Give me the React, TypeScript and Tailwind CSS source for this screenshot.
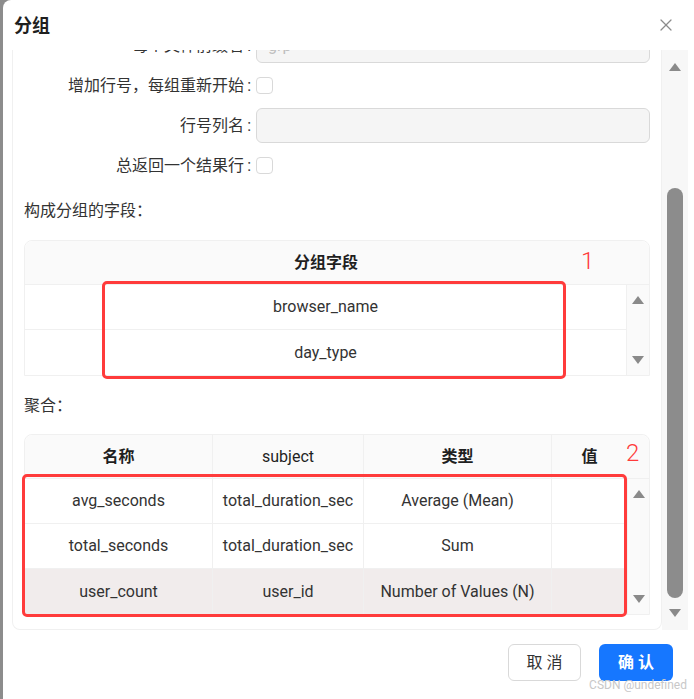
import { X } from 'lucide-react';

const FONT = { fontFamily: 'Roboto, "Noto Sans CJK SC", sans-serif' };

function Caret({ down = false }: { down?: boolean }) {
  return (
    <svg width="12" height="8" viewBox="0 0 12 8" className="block">
      {down ? <path d="M0 0h12L6 8z" fill="#8a8a8a" /> : <path d="M6 0l6 8H0z" fill="#8a8a8a" />}
    </svg>
  );
}

function Checkbox() {
  return <span className="inline-block w-[17px] h-[17px] rounded border border-[#d9d9d9] bg-white" />;
}

function FormRow({ label, children, tall = false }: { label: string; children: React.ReactNode; tall?: boolean }) {
  return (
    <div className={`flex items-center ${tall ? 'h-[35px]' : 'h-[17px]'}`}>
      <div className="w-[232px] text-right text-[16px] text-[#333] whitespace-nowrap">
        {label}
        <span className="ml-[3px] mr-[5px]">:</span>
      </div>
      <div className="flex-1 flex items-center">{children}</div>
    </div>
  );
}

function InputBox({ placeholder = '' }: { placeholder?: string }) {
  return (
    <div className="w-full h-[35px] rounded-md border border-[#d9d9d9] bg-[#f5f5f5] px-[11px] flex items-center text-[16px] text-[#bfbfbf]">
      {placeholder}
    </div>
  );
}

function ScrollColumn() {
  return (
    <div className="w-[23px] border-l border-[#f0f0f0] bg-[#fafafa] flex flex-col items-center">
      <div className="mt-[11px]"><Caret /></div>
      <div className="flex-1" />
      <div className="mb-[11px]"><Caret down /></div>
    </div>
  );
}

const AGG_ROWS = [
  { name: 'avg_seconds', subject: 'total_duration_sec', type: 'Average (Mean)', value: '' },
  { name: 'total_seconds', subject: 'total_duration_sec', type: 'Sum', value: '' },
  { name: 'user_count', subject: 'user_id', type: 'Number of Values (N)', value: '' },
];

export default function App() {
  return (
    <div className="w-[694px] h-[699px] flex bg-[#8c8c8c] overflow-hidden" style={FONT}>
      <div className="w-[3px]" />
      <div className="relative flex-1 bg-white rounded-tl-lg flex flex-col">
        {/* header */}
        <div className="h-[50px] flex items-center justify-between pl-[11px] pr-[18px]">
          <span className="text-[18px] font-bold text-[#1f1f1f]">分组</span>
          <X size={20} strokeWidth={1.5} className="text-[#8c8c8c]" />
        </div>

        {/* body */}
        <div className="h-[580px] flex pl-[9px]">
          <div className="w-[650px] border-x border-b border-[#f0f0f0] rounded-b-lg overflow-hidden px-[11px]">
            <div className="-mt-[22px] flex flex-col">
              <div className="flex flex-col gap-[14px]">
                <FormRow label="每个文件前缀名" tall>
                  <InputBox placeholder="grp" />
                </FormRow>
                <FormRow label="增加行号，每组重新开始">
                  <Checkbox />
                </FormRow>
                <FormRow label="行号列名" tall>
                  <InputBox />
                </FormRow>
                <FormRow label="总返回一个结果行">
                  <Checkbox />
                </FormRow>
              </div>

              <div className="mt-[26px] h-[22px] leading-[22px] text-[16px] text-[#333]">构成分组的字段：</div>

              {/* group fields table */}
              <div className="relative mt-[18px] border border-[#f0f0f0] rounded-t-lg">
                <div className="h-[44px] bg-[#fafafa] border-b border-[#f0f0f0] rounded-t-lg flex">
                  <div className="w-[602px] flex items-center justify-center text-[16px] font-bold text-[#1f1f1f]">分组字段</div>
                </div>
                <div className="flex">
                  <div className="w-[602px] flex flex-col">
                    {['browser_name', 'day_type'].map((f, i) => (
                      <div key={f} className={`h-[45px] flex items-center justify-center text-[16px] text-[#333] ${i === 0 ? 'border-b border-[#f0f0f0]' : ''}`}>
                        {f}
                      </div>
                    ))}
                  </div>
                  <ScrollColumn />
                </div>
                <span className="absolute left-[556px] top-[2px] text-[24px] font-light text-[#ff3b3b]">1</span>
                <div className="absolute left-[77px] top-[40px] w-[464px] h-[98px] border-[3px] border-[#ff3b3b] rounded-[5px]" />
              </div>

              <div className="mt-[19px] h-[22px] leading-[22px] text-[16px] text-[#333]">聚合：</div>

              {/* aggregation table */}
              <div className="relative mt-[17px] border border-[#f0f0f0] rounded-t-lg">
                <div className="h-[44px] bg-[#fafafa] border-b border-[#f0f0f0] rounded-t-lg flex text-[16px] text-[#1f1f1f]">
                  <div className="w-[188px] flex items-center justify-center font-bold border-r border-[#f0f0f0]">名称</div>
                  <div className="w-[151px] flex items-center justify-center border-r border-[#f0f0f0]">subject</div>
                  <div className="w-[188px] flex items-center justify-center font-bold border-r border-[#f0f0f0]">类型</div>
                  <div className="w-[75px] flex items-center justify-center font-bold">值</div>
                </div>
                <div className="flex">
                  <div className="w-[602px] flex flex-col">
                    {AGG_ROWS.map((r, i) => (
                      <div
                        key={r.name}
                        className={`h-[45px] flex text-[16px] text-[#333] ${i < 2 ? 'border-b border-[#f0f0f0]' : 'bg-[#f1ecec]'}`}
                      >
                        <div className="w-[188px] flex items-center justify-center border-r border-[#f0f0f0]">{r.name}</div>
                        <div className="w-[151px] flex items-center justify-center border-r border-[#f0f0f0] whitespace-nowrap overflow-hidden">{r.subject}</div>
                        <div className="w-[188px] flex items-center justify-center border-r border-[#f0f0f0] whitespace-nowrap">{r.type}</div>
                        <div className="w-[75px] flex items-center justify-center">{r.value}</div>
                      </div>
                    ))}
                  </div>
                  <ScrollColumn />
                </div>
                <span className="absolute left-[601px] top-[0px] text-[24px] font-light text-[#ff3b3b]">2</span>
                <div className="absolute -left-[3px] top-[39px] w-[605px] h-[143px] border-[3px] border-[#ff3b3b] rounded-[5px]" />
              </div>
            </div>
          </div>

          {/* outer scrollbar */}
          <div className="w-[26px] bg-[#f7f7f7] flex flex-col items-center">
            <div className="mt-[13px]"><Caret /></div>
            <div className="mt-[117px] w-[16px] h-[410px] rounded-full bg-[#8c8c8c]" />
            <div className="mt-[11px]"><Caret down /></div>
          </div>
        </div>

        {/* footer */}
        <div className="flex justify-end gap-[18px] pr-[21px] pt-[14px]">
          <button className="w-[73px] h-[37px] rounded-md border border-[#d9d9d9] bg-white text-[16px] text-[#333]">取 消</button>
          <button className="w-[74px] h-[37px] rounded-md bg-[#1677ff] text-[16px] font-bold text-white">确 认</button>
        </div>
        <span className="absolute right-[7px] bottom-[5px] text-[12px] text-[#c8c8c8]">CSDN @undefined</span>
      </div>
    </div>
  );
}
